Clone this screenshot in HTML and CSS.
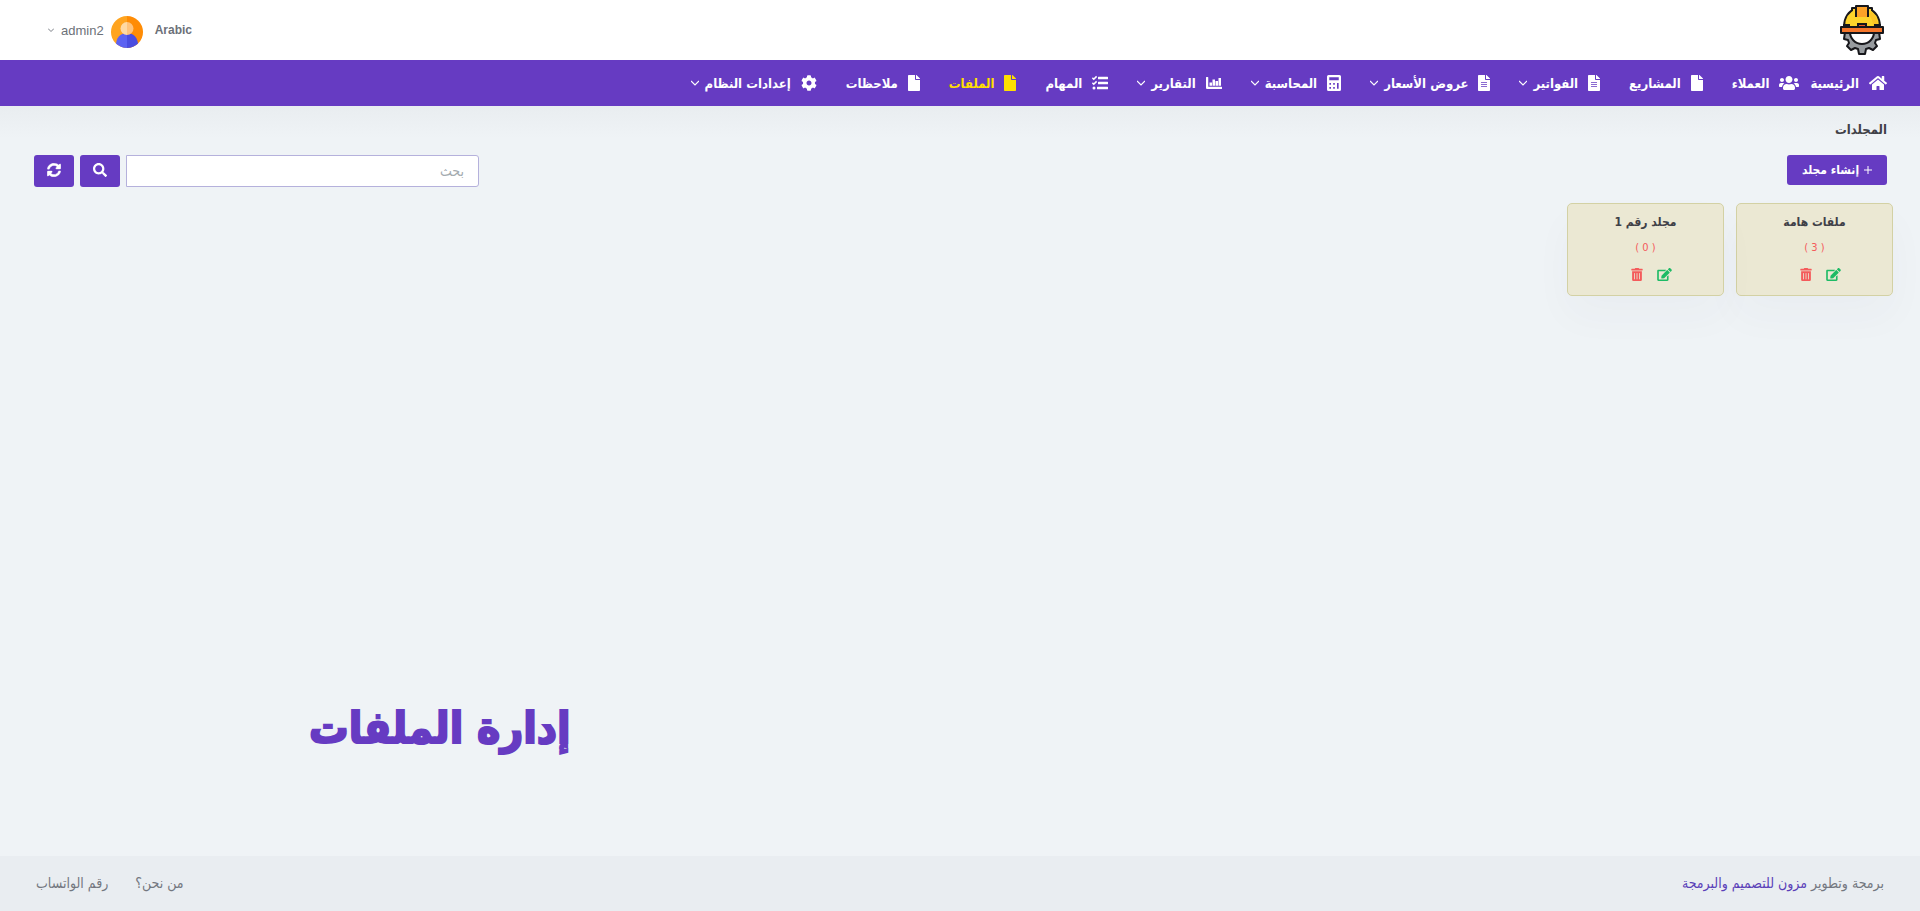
FILE: index.html
```html
<!DOCTYPE html>
<html lang="ar" dir="rtl">
<head>
<meta charset="utf-8">
<meta name="viewport" content="width=device-width, initial-scale=1">
<title>إدارة الملفات</title>
<link rel="stylesheet" href="styles.css">
</head>
<body>
<svg class="sprite" aria-hidden="true">
  <symbol id="i-home" viewBox="0 0 576 512"><path d="M280.37 148.26L96 300.11V464a16 16 0 0 0 16 16l112.06-.29a16 16 0 0 0 15.92-16V368a16 16 0 0 1 16-16h64a16 16 0 0 1 16 16v95.64a16 16 0 0 0 16 16.05L464 480a16 16 0 0 0 16-16V300L295.67 148.26a12.19 12.19 0 0 0-15.3 0zM571.6 251.47L488 182.56V44.05a12 12 0 0 0-12-12h-56a12 12 0 0 0-12 12v72.61L318.47 43a48 48 0 0 0-61 0L4.34 251.47a12 12 0 0 0-1.6 16.9l25.5 31A12 12 0 0 0 45.15 301l235.22-193.74a12.19 12.19 0 0 1 15.3 0L530.9 301a12 12 0 0 0 16.9-1.6l25.5-31a12 12 0 0 0-1.7-16.93z"/></symbol>
  <symbol id="i-users" viewBox="0 0 640 512"><path d="M96 224c35.3 0 64-28.7 64-64s-28.7-64-64-64-64 28.7-64 64 28.7 64 64 64zm448 0c35.3 0 64-28.7 64-64s-28.7-64-64-64-64 28.7-64 64 28.7 64 64 64zm32 32h-64c-17.6 0-33.5 7.1-45.1 18.6 40.3 22.1 68.9 62 75.1 109.4h66c17.7 0 32-14.3 32-32v-32c0-35.3-28.7-64-64-64zm-256 0c61.9 0 112-50.1 112-112S381.9 32 320 32 208 82.1 208 144s50.1 112 112 112zm76.8 32h-8.3c-20.8 10-43.9 16-68.5 16s-47.6-6-68.5-16h-8.3C179.6 288 128 339.6 128 403.2V432c0 26.5 21.5 48 48 48h288c26.5 0 48-21.5 48-48v-28.8c0-63.6-51.6-115.2-115.2-115.2zm-223.7-13.4C161.5 263.1 145.6 256 128 256H64c-35.3 0-64 28.7-64 64v32c0 17.7 14.3 32 32 32h65.9c6.3-47.4 34.9-87.3 75.2-109.4z"/></symbol>
  <symbol id="i-file" viewBox="0 0 384 512"><path d="M224 136V0H24C10.7 0 0 10.7 0 24v464c0 13.3 10.7 24 24 24h336c13.3 0 24-10.7 24-24V160H248c-13.2 0-24-10.8-24-24zm160-14.1v6.1H256V0h6.1c6.4 0 12.5 2.5 17 7l97.9 98c4.5 4.5 7 10.6 7 16.9z"/></symbol>
  <symbol id="i-file-alt" viewBox="0 0 384 512"><path fill-rule="evenodd" d="M224 136V0H24C10.7 0 0 10.7 0 24v464c0 13.3 10.7 24 24 24h336c13.3 0 24-10.7 24-24V160H248c-13.2 0-24-10.8-24-24zm160-14.1v6.1H256V0h6.1c6.4 0 12.5 2.5 17 7l97.9 98c4.5 4.5 7 10.6 7 16.9zM96 228h192v24H96zM96 292h192v24H96zM96 356h192v24H96z"/></symbol>
  <symbol id="i-calc" viewBox="0 0 448 512"><path fill-rule="evenodd" d="M48 0h352a48 48 0 0 1 48 48v416a48 48 0 0 1-48 48H48a48 48 0 0 1-48-48V48A48 48 0 0 1 48 0zM72 72v96h304V72zM76 256v52h52v-52zM198 256v52h52v-52zM320 256v180h52V256zM76 384v52h52v-52zM198 384v52h52v-52z"/></symbol>
  <symbol id="i-chart" viewBox="0 0 512 512"><path d="M16 64h40a16 16 0 0 1 16 16v296h424a16 16 0 0 1 16 16v40a16 16 0 0 1-16 16H32a32 32 0 0 1-32-32V80a16 16 0 0 1 16-16zM112 236h80v108h-80zM208 140h80v204h-80zM304 188h80v156h-80zM400 92h80v252h-80z"/></symbol>
  <symbol id="i-tasks" viewBox="0 0 512 512"><path d="M208 56h288a16 16 0 0 1 16 16v44a16 16 0 0 1-16 16H208a16 16 0 0 1-16-16V72a16 16 0 0 1 16-16zM208 216h288a16 16 0 0 1 16 16v44a16 16 0 0 1-16 16H208a16 16 0 0 1-16-16v-44a16 16 0 0 1 16-16zM176 376h320a16 16 0 0 1 16 16v44a16 16 0 0 1-16 16H176a16 16 0 0 1-16-16v-44a16 16 0 0 1 16-16z"/><circle cx="64" cy="416" r="48"/><path fill="none" stroke="currentColor" stroke-width="50" d="M12 92l44 44L148 44M12 252l44 44 92-92"/></symbol>
  <symbol id="i-cog" viewBox="0 0 512 512"><path d="M487.4 315.7l-42.6-24.6c4.3-23.2 4.3-47 0-70.2l42.6-24.6c4.9-2.8 7.1-8.6 5.5-14-11.1-35.6-30-67.8-54.7-94.6-3.8-4.1-10-5.1-14.8-2.3L380.8 110c-17.9-15.4-38.5-27.3-60.8-35.1V25.8c0-5.6-3.9-10.5-9.4-11.7-36.7-8.2-74.3-7.8-109.2 0-5.5 1.2-9.4 6.1-9.4 11.7V75c-22.2 7.9-42.8 19.8-60.8 35.1L88.7 85.5c-4.9-2.8-11-1.9-14.8 2.3-24.7 26.7-43.6 58.9-54.7 94.6-1.7 5.4.6 11.2 5.5 14L67.3 221c-4.3 23.2-4.3 47 0 70.2l-42.6 24.6c-4.9 2.8-7.1 8.6-5.5 14 11.1 35.6 30 67.8 54.7 94.6 3.8 4.1 10 5.1 14.8 2.3l42.6-24.6c17.9 15.4 38.5 27.3 60.8 35.1v49.2c0 5.6 3.9 10.5 9.4 11.7 36.7 8.2 74.3 7.8 109.2 0 5.5-1.2 9.4-6.1 9.4-11.7v-49.2c22.2-7.9 42.8-19.8 60.8-35.1l42.6 24.6c4.9 2.8 11 1.9 14.8-2.3 24.7-26.7 43.6-58.9 54.7-94.6 1.5-5.5-.7-11.3-5.6-14.1zM256 336c-44.1 0-80-35.9-80-80s35.9-80 80-80 80 35.9 80 80-35.9 80-80 80z"/></symbol>
  <symbol id="i-search" viewBox="0 0 512 512"><path d="M505 442.7L405.3 343c-4.5-4.5-10.6-7-17-7H372c27.6-35.3 44-79.7 44-128C416 93.1 322.9 0 208 0S0 93.1 0 208s93.1 208 208 208c48.3 0 92.7-16.4 128-44v16.3c0 6.4 2.5 12.5 7 17l99.7 99.7c9.4 9.4 24.6 9.4 33.9 0l28.3-28.3c9.4-9.4 9.4-24.6.1-34zM208 336c-70.7 0-128-57.2-128-128 0-70.7 57.2-128 128-128 70.7 0 128 57.2 128 128 0 70.7-57.2 128-128 128z"/></symbol>
  <symbol id="i-sync" viewBox="0 0 512 512"><path stroke="currentColor" stroke-width="16" d="M370.72 133.28C339.458 104.008 298.888 87.962 255.848 88c-77.458.068-144.328 53.178-162.791 126.85-1.344 5.363-6.122 9.15-11.651 9.15H24.103c-7.498 0-13.194-6.807-11.807-14.176C33.933 94.924 134.813 8 256 8c66.448 0 126.791 26.136 171.315 68.685L463.03 40.97C478.149 25.851 504 36.559 504 57.941V192c0 13.255-10.745 24-24 24H345.941c-21.382 0-32.09-25.851-16.971-40.971l41.75-41.749zM32 296h134.059c21.382 0 32.09 25.851 16.971 40.971l-41.75 41.75c31.262 29.273 71.835 45.319 114.876 45.28 77.418-.07 144.315-53.144 162.787-126.849 1.344-5.363 6.122-9.15 11.651-9.15h57.304c7.498 0 13.194 6.807 11.807 14.176C478.067 417.076 377.187 504 256 504c-66.448 0-126.791-26.136-171.315-68.685L48.97 471.03C33.851 486.149 8 475.441 8 454.059V320c0-13.255 10.745-24 24-24z"/></symbol>
  <symbol id="i-edit" viewBox="0 0 576 512"><path d="M402.6 83.2l90.2 90.2c3.8 3.8 3.8 10 0 13.8L274.4 405.6l-92.8 10.3c-12.4 1.4-22.9-9.1-21.5-21.5l10.3-92.8L388.8 83.2c3.8-3.8 10-3.8 13.8 0zm162-22.9l-48.8-48.8c-15.2-15.2-39.9-15.2-55.2 0l-35.4 35.4c-3.8 3.8-3.8 10 0 13.8l90.2 90.2c3.8 3.8 10 3.8 13.8 0l35.4-35.4c15.2-15.3 15.2-40 0-55.2zM384 346.2V448H64V128h229.8c3.2 0 6.2-1.3 8.5-3.5l40-40c7.6-7.6 2.2-20.5-8.5-20.5H48C21.5 64 0 85.5 0 112v352c0 26.5 21.5 48 48 48h352c26.5 0 48-21.5 48-48V306.2c0-10.7-12.9-16-20.5-8.5l-40 40c-2.2 2.3-3.5 5.3-3.5 8.5z"/></symbol>
  <symbol id="i-trash" viewBox="0 0 448 512"><path d="M32 464a48 48 0 0 0 48 48h288a48 48 0 0 0 48-48V128H32zm272-256a16 16 0 0 1 32 0v224a16 16 0 0 1-32 0zm-96 0a16 16 0 0 1 32 0v224a16 16 0 0 1-32 0zm-96 0a16 16 0 0 1 32 0v224a16 16 0 0 1-32 0zM432 32H312l-9.4-18.7A24 24 0 0 0 281.1 0H166.8a23.72 23.72 0 0 0-21.4 13.3L136 32H16A16 16 0 0 0 0 48v32a16 16 0 0 0 16 16h416a16 16 0 0 0 16-16V48a16 16 0 0 0-16-16z"/></symbol>
  <symbol id="i-down" viewBox="0 0 8 8"><path fill="none" stroke="currentColor" stroke-width="1.2" d="M0 2l4 4 4-4"/></symbol>
</svg>

<header class="topbar">
  <a class="logo" href="#" aria-label="الرئيسية">
    <svg viewBox="0 0 44 50" width="44" height="50">
      <path d="M5 27L4 34l4 1 1 3-2 3 4 4 4-2 3 1 1 5h6l1-5 3-1 4 2 4-4-2-3 1-3 4-1-1-7z" fill="#979b9f" stroke="#17171b" stroke-width="2" stroke-linejoin="round"/>
      <path d="M10 27a12 12 0 0 0 24 0z" fill="#fff" stroke="#17171b" stroke-width="2"/>
      <path d="M4 22C4 12 9 6 15 4h14c6 2 11 8 11 18z" fill="#fdd32b" stroke="#17171b" stroke-width="2"/>
      <path d="M31 6c4 4 7 9 7 15h-5c0-5-2-9-5-12z" fill="#fbc425"/>
      <path d="M12 6V3h4v7M32 6V3h-4v7" fill="#fdd32b" stroke="#17171b" stroke-width="2" stroke-linejoin="round"/>
      <path d="M17 1h10v11H17z" fill="#fda228"/>
      <path d="M16 12V1h12v11" fill="none" stroke="#17171b" stroke-width="2" stroke-linejoin="round"/>
      <path d="M4 22v-2h5v2M18 22v-3h8v3M35 22v-2h5v2" fill="#e8562a" stroke="#17171b" stroke-width="2"/>
      <path d="M1 22h42v6H1z" fill="#f5762b" stroke="#17171b" stroke-width="2" stroke-linejoin="round"/>
    </svg>
  </a>
  <div class="account">
    <a class="lang" href="#">Arabic</a>
    <button class="user" type="button">
      <svg class="avatar" width="32" height="32" viewBox="0 0 32 32" aria-hidden="true">
        <clipPath id="round"><circle cx="16" cy="16" r="16"/></clipPath>
        <g clip-path="url(#round)">
          <path fill="#ffa41f" d="M0 0h16v32H0z"/><path fill="#ff8c05" d="M16 0h16v32H16z"/>
          <path fill="#5c62f2" d="M16 17C9 17 5 22 5 29v3h11z"/><path fill="#4a4de0" d="M16 17c7 0 11 5 11 12v3H16z"/>
          <path fill="#ffd9a3" d="M16 6a6 6 0 0 0 0 13z"/><path fill="#ffc37b" d="M16 6a6 6 0 0 1 0 13z"/>
        </g>
      </svg>
      <span>admin2</span>
      <svg class="chev small" aria-hidden="true"><use href="#i-down"/></svg>
    </button>
  </div>
</header>

<nav class="menu">
  <a class="item" href="#"><svg class="ic w18"><use href="#i-home"/></svg>الرئيسية</a>
  <a class="item" href="#"><svg class="ic w20"><use href="#i-users"/></svg>العملاء</a>
  <a class="item" href="#"><svg class="ic w12"><use href="#i-file"/></svg>المشاريع</a>
  <a class="item" href="#"><svg class="ic w12"><use href="#i-file-alt"/></svg>الفواتير<svg class="chev"><use href="#i-down"/></svg></a>
  <a class="item" href="#"><svg class="ic w12"><use href="#i-file-alt"/></svg>عروض الأسعار<svg class="chev"><use href="#i-down"/></svg></a>
  <a class="item" href="#"><svg class="ic w14"><use href="#i-calc"/></svg>المحاسبة<svg class="chev"><use href="#i-down"/></svg></a>
  <a class="item" href="#"><svg class="ic w16"><use href="#i-chart"/></svg>التقارير<svg class="chev"><use href="#i-down"/></svg></a>
  <a class="item" href="#"><svg class="ic w16"><use href="#i-tasks"/></svg>المهام</a>
  <a class="item active" href="#"><svg class="ic w12"><use href="#i-file"/></svg>الملفات</a>
  <a class="item" href="#"><svg class="ic w12"><use href="#i-file"/></svg>ملاحظات</a>
  <a class="item" href="#"><svg class="ic w16"><use href="#i-cog"/></svg>إعدادات النظام<svg class="chev"><use href="#i-down"/></svg></a>
</nav>

<main class="page">
  <h1 class="heading">المجلدات</h1>
  <div class="tools">
    <button class="btn create" type="button"><svg width="8" height="8" viewBox="0 0 8 8" aria-hidden="true"><path d="M4 0v8M0 4h8" stroke="currentColor"/></svg>إنشاء مجلد</button>
    <form class="search" role="search">
      <input class="field" type="search" placeholder="بحث" aria-label="بحث">
      <button class="btn square" type="submit" aria-label="بحث"><svg class="ic14"><use href="#i-search"/></svg></button>
      <button class="btn square" type="button" aria-label="تحديث"><svg class="ic14"><use href="#i-sync"/></svg></button>
    </form>
  </div>
  <section class="folders">
    <article class="folder">
      <h2 class="name">ملفات هامة</h2>
      <p class="count">( 3 )</p>
      <div class="actions">
        <button class="act edit" type="button" aria-label="تعديل"><svg class="ic15"><use href="#i-edit"/></svg></button>
        <button class="act del" type="button" aria-label="حذف"><svg class="ic12"><use href="#i-trash"/></svg></button>
      </div>
    </article>
    <article class="folder">
      <h2 class="name">مجلد رقم 1</h2>
      <p class="count">( 0 )</p>
      <div class="actions">
        <button class="act edit" type="button" aria-label="تعديل"><svg class="ic15"><use href="#i-edit"/></svg></button>
        <button class="act del" type="button" aria-label="حذف"><svg class="ic12"><use href="#i-trash"/></svg></button>
      </div>
    </article>
  </section>
  <p class="caption">إدارة الملفات</p>
</main>

<footer class="footer">
  <p class="credit">برمجة وتطوير <a class="brand" href="#">مزون للتصميم والبرمجة</a></p>
  <div class="links"><a href="#">من نحن؟</a><a href="#">رقم الواتساب</a></div>
</footer>
</body>
</html>
```

FILE: styles.css
```css
* { box-sizing: border-box; }
body {
  margin: 0;
  min-height: 100vh;
  display: flex;
  flex-direction: column;
  background: #eff3f6;
  color: #3f4047;
  font-family: "DejaVu Sans Condensed", "DejaVu Sans", sans-serif;
  font-size: 12px;
}
a { color: inherit; text-decoration: none; }
button, input { font: inherit; }
button { border: 0; padding: 0; background: none; color: inherit; cursor: pointer; }
h1, h2, p { margin: 0; }
svg { display: block; flex: none; fill: currentColor; }
.sprite { position: absolute; width: 0; height: 0; }
.topbar {
  display: flex;
  justify-content: space-between;
  align-items: center;
  height: 60px;
  padding: 0 36px 0 48px;
  background: #fff;
}
.account { display: flex; align-items: center; gap: 12px; color: #6c7179; font-family: "Liberation Sans", sans-serif; }
.lang { font-weight: bold; }
.user { display: flex; align-items: center; gap: 7px; font-size: 13px; }
.avatar { margin-top: 4px; }
.chev { width: 8px; height: 8px; }
.small { width: 6px; stroke-width: 2px; }
.menu {
  display: flex;
  min-height: 46px;
  padding: 0 33px;
  background: #663bc2;
  color: #fff;
  font-size: 13px;
  font-weight: bold;
}
.item { display: flex; align-items: center; gap: 10px; margin-left: 29px; white-space: nowrap; }
.item:first-child { margin-left: 11px; }
.item .chev { margin-right: -4px; }
.ic { height: 16px; }
.w12 { width: 12px; }
.w14 { width: 14px; }
.w16 { width: 16px; }
.w18 { width: 18px; }
.w20 { width: 20px; }
.active { color: #ffdf00; }
.page { flex: 1; display: flex; flex-direction: column; padding: 14px 33px 88px 34px; background: linear-gradient(#e9edf0, #eff3f6 32px); }
.heading { font-size: 13px; line-height: 20px; }
.tools { display: flex; justify-content: space-between; align-items: flex-start; margin-top: 15px; }
.btn { display: flex; align-items: center; justify-content: center; border-radius: 3px; background: #663bc2; color: #fff; }
.create { gap: 5px; width: 100px; height: 30px; font-size: 12px; font-weight: bold; }
.search { display: flex; gap: 6px; width: 445px; }
.field {
  flex: 1;
  min-width: 0;
  height: 32px;
  padding: 0 14px;
  border: 1px solid #b5b1dc;
  border-radius: 0 3px 3px 0;
  background: #fff;
  font-size: 14px;
}
.field::placeholder { color: #a4abb0; }
.square { width: 40px; height: 32px; padding-bottom: 2px; }
.ic14 { width: 14px; height: 14px; }
.ic15 { width: 15px; height: 13px; }
.ic12 { width: 12px; height: 13px; }
.folders { display: flex; gap: 12px; margin: 16px -6px 0; }
.folder {
  display: flex;
  flex-direction: column;
  align-items: center;
  width: 157px;
  height: 93px;
  padding-top: 9px;
  border: 1px solid #d3d1a4;
  border-radius: 5px;
  background: #ebe8d3;
  box-shadow: 0 20px 40px rgba(60, 70, 90, 0.03);
}
.name { font-size: 12px; line-height: 18px; }
.count { margin-top: 9px; color: #f45b5b; font-size: 11px; line-height: 16px; }
.actions { display: flex; gap: 14px; margin-top: 12px; padding-left: 12px; }
.edit { color: #1dbb65; }
.del { color: #f45b5b; }
.caption {
  align-self: flex-end;
  margin: auto 0 0;
  padding-left: 275px;
  color: #663bc2;
  font-size: 44px;
  font-weight: bold;
  line-height: 80px;
  -webkit-text-stroke: 2px #663bc2;
}
.footer {
  display: flex;
  justify-content: space-between;
  align-items: center;
  height: 55px;
  padding: 0 36px 2px;
  background: #e9edf1;
  color: #73777f;
  font-size: 14px;
}
.brand { color: #5a3fb8; }
.links { display: flex; gap: 27px; }
```
